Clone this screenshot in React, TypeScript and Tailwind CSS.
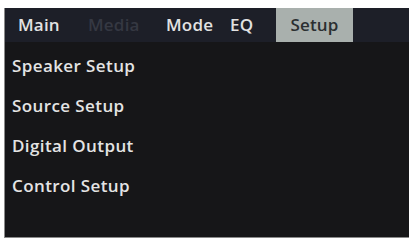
const tabs = [
  { label: "Main", cls: "w-[70px] pl-[13px] text-[#e2e2e2]" },
  { label: "Media", cls: "w-[78px] pl-[13px] text-[#353842]" },
  { label: "Mode", cls: "w-[67px] pl-[13px] text-[#e2e2e2]" },
  { label: "EQ", cls: "w-[56px] pl-[10px] text-[#e2e2e2]" },
];

const items = ["Speaker Setup", "Source Setup", "Digital Output", "Control Setup"];

export default function App() {
  return (
    <div className="w-[412px] h-[243px] bg-white pl-[4px] pt-[8px]" style={{ fontFamily: '"Open Sans", sans-serif' }}>
      <div className="w-[405px] h-[230px] bg-[#161618] border-l border-b border-[#8a8a8a] flex flex-col">
        <div className="h-[34px] bg-[#1d1f28] flex items-stretch text-[17px] font-semibold tracking-[0.2px]">
          {tabs.map((t) => (
            <div key={t.label} className={`flex items-center ${t.cls}`}>
              {t.label}
            </div>
          ))}
          <div className="w-[77px] bg-[#a9b0ad] text-[#2b2f31] flex items-center justify-center">Setup</div>
        </div>
        <div className="flex flex-col pl-[7px] pt-[4px] text-[17px] font-semibold tracking-[0.4px] text-[#e4e4e4]">
          {items.map((it) => (
            <div key={it} className="h-[40px] flex items-center">
              {it}
            </div>
          ))}
        </div>
      </div>
    </div>
  );
}
